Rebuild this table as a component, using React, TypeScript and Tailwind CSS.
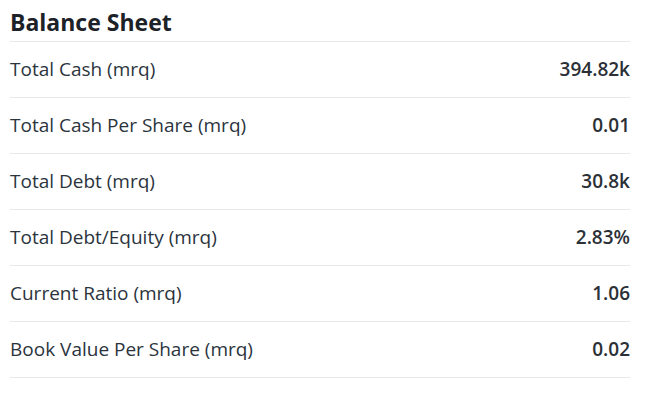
import React from "react";

const rows = [
  { label: "Total Cash (mrq)", value: "394.82k" },
  { label: "Total Cash Per Share (mrq)", value: "0.01" },
  { label: "Total Debt (mrq)", value: "30.8k" },
  { label: "Total Debt/Equity (mrq)", value: "2.83%" },
  { label: "Current Ratio (mrq)", value: "1.06" },
  { label: "Book Value Per Share (mrq)", value: "0.02" },
];

function App() {
  return (
    <div className="min-h-[407px] bg-white font-['Open_Sans',sans-serif] text-[#232a31]">
      <div className="ml-[10px] w-[620px]">
        <h3 className="h-[42px] border-b border-[#e6e9ec] pt-[9px] text-[23px] font-bold leading-[27px] text-[#1d2228]">
          Balance Sheet
        </h3>
        {rows.map((r) => (
          <div
            key={r.label}
            className="flex h-[56px] items-center justify-between border-b border-[#e6e9ec] text-[19px]"
          >
            <span className="text-[#2b343d]">{r.label}</span>
            <span className="font-semibold text-[#2b3036]">{r.value}</span>
          </div>
        ))}
      </div>
    </div>
  );
}

export default App;
